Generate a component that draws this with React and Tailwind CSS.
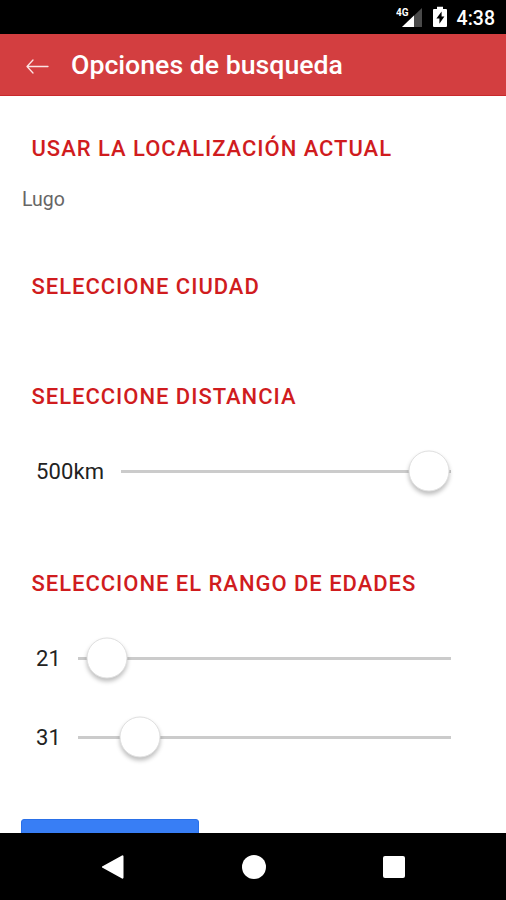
import React from "react";

const StatusBar = () => (
  <div className="flex h-[34px] shrink-0 items-center justify-end bg-black pr-[11px] text-white">
    <svg className="mr-[11px]" width="26" height="22" viewBox="0 0 26 22">
      <path d="M26 2V21H6z" fill="#4a4a4a" />
      <path d="M18 9.5V21H6z" fill="#fff" />
      <rect x="0" y="0" width="13.5" height="11" fill="#000" />
      <text x="0" y="9.6" fill="#fff" fontSize="10" fontWeight="700" fontFamily="Roboto, sans-serif">4G</text>
    </svg>
    <svg className="mr-[10px]" width="14" height="22" viewBox="0 0 14 22">
      <path d="M1 3h3V0.8h6V3h3a1 1 0 0 1 1 1v16a1 1 0 0 1-1 1H1a1 1 0 0 1-1-1V4a1 1 0 0 1 1-1z" fill="#fff" />
      <path d="M8.6 5.5L3.4 12.6h3v5.2l5-7.4h-2.8z" fill="#000" />
    </svg>
    <span className="pt-[3px] text-[19.5px] leading-none font-medium">4:38</span>
  </div>
);

const Toolbar = () => (
  <header className="flex h-[62px] shrink-0 items-center border-b border-[#c9292c] bg-[#d33e40] pl-[26px] text-white">
    <svg className="mt-[4px] mr-[22px]" width="23" height="15" viewBox="0 0 23 15" fill="none" stroke="#fbe3e3" strokeWidth="1.3" strokeLinecap="round" strokeLinejoin="round">
      <path d="M7 1L1 7.5L7 14M1 7.5H22" />
    </svg>
    <h1 className="pt-[2px] text-[26.7px] leading-none font-medium">Opciones de busqueda</h1>
  </header>
);

const Title = ({ children }) => (
  <h2 className="pl-[31.5px] text-[22px] leading-[30px] font-medium tracking-[0.97px] whitespace-nowrap text-[#d01c1e] uppercase">{children}</h2>
);

const Range = ({ label, value, labelClass }) => (
  <div className="flex h-[42px] items-center pr-[55px] pl-9">
    <span className={`${labelClass} shrink-0 pt-[2px] text-[22px] leading-none tracking-[0.1px] text-[#222]`}>{label}</span>
    <div className="relative h-[3px] flex-1 bg-[#cbcbcb]">
      <div
        className="absolute top-1/2 h-[41px] w-[41px] -translate-x-1/2 -translate-y-1/2 rounded-full border border-[#e0e0e0] bg-white shadow-[0_3px_4px_rgba(0,0,0,0.25)]"
        style={{ left: `${value}%` }}
      />
    </div>
  </div>
);

const NavBar = () => (
  <nav className="flex h-[67px] shrink-0 items-center bg-black pl-[101px]">
    <svg width="23" height="26" viewBox="0 0 23 26" fill="#fff">
      <path d="M21 1.5a1 1 0 0 1 1.500.9v21.2a1 1 0 0 1-1.500.9L2 14a1 1 0 0 1 0-2z" />
    </svg>
    <div className="ml-[118px] h-6 w-6 rounded-full bg-white" />
    <div className="ml-[117px] h-[22px] w-[22px] rounded-[2px] bg-white" />
  </nav>
);

const App = () => {
  return (
    <div className="flex h-[900px] w-[506px] flex-col overflow-hidden bg-white font-['Roboto',sans-serif]">
      <StatusBar />
      <Toolbar />
      <main className="flex-1 overflow-hidden pt-[38px]">
        <section className="h-[138px]">
          <Title>Usar la localización actual</Title>
          <p className="mt-[21px] pl-[22px] text-[19.5px] leading-[30px] text-[#666]">Lugo</p>
        </section>
        <section className="h-[110px]">
          <Title>Seleccione ciudad</Title>
        </section>
        <section className="h-[187px]">
          <Title>Seleccione distancia</Title>
          <div className="mt-[38px]">
            <Range label="500km" value={93.3} labelClass="w-[85px]" />
          </div>
        </section>
        <section className="h-[250px]">
          <Title>Seleccione el rango de edades</Title>
          <div className="mt-[38px] flex flex-col gap-[37px]">
            <Range label="21" value={7.8} labelClass="w-[42px]" />
            <Range label="31" value={16.6} labelClass="w-[42px]" />
          </div>
        </section>
        <button className="ml-[21px] block h-12 w-[178px] rounded-[3px] border border-[#2a70e8] bg-[#387ef5]" />
      </main>
      <NavBar />
    </div>
  );
};

export default App;
